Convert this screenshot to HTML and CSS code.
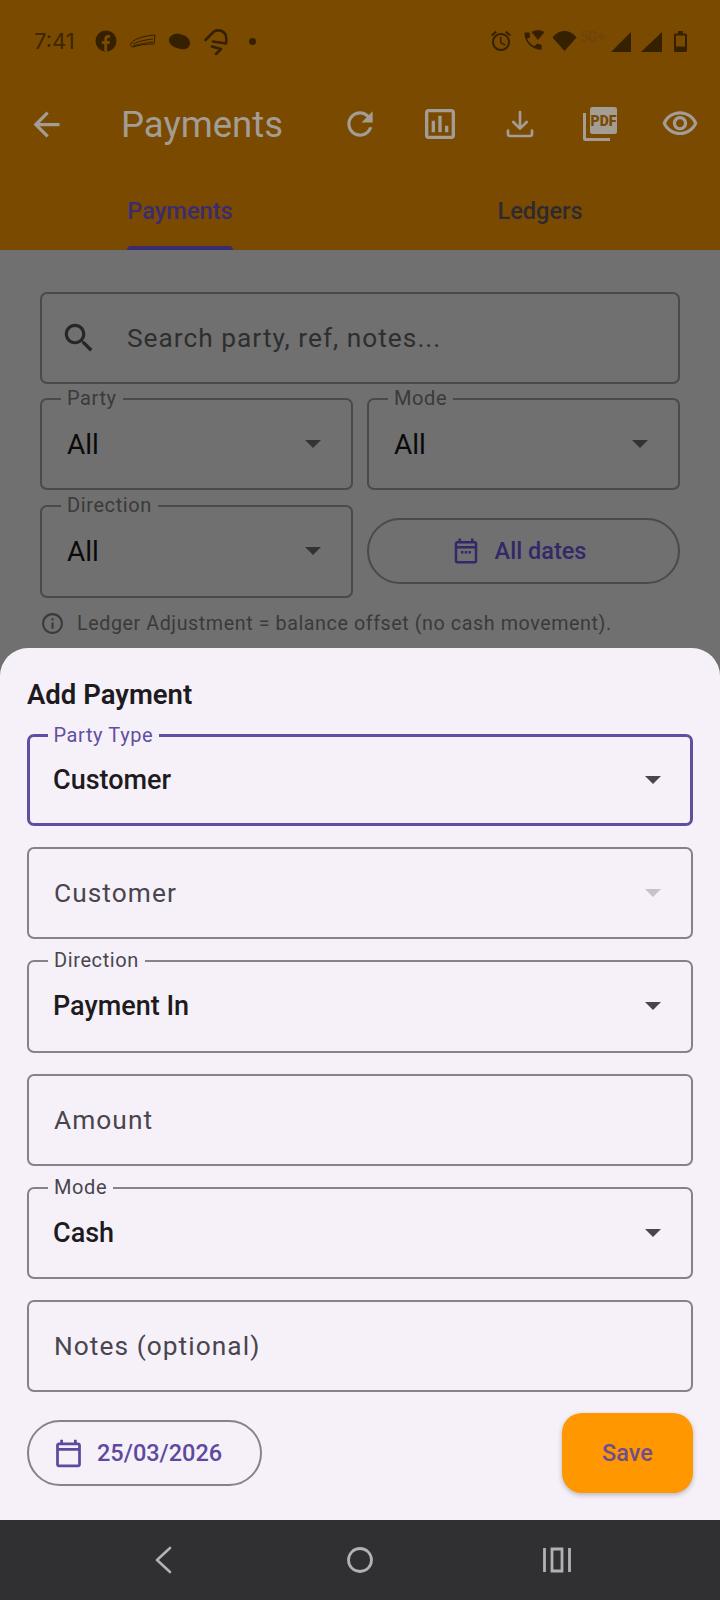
FILE: index.html
```html
<!DOCTYPE html>
<html lang="en">
<head>
    <meta charset="UTF-8">
    <meta name="viewport" content="width=device-width, initial-scale=1.0">
    <title>Payments</title>
    <link rel="stylesheet" href="styles.css">
</head>
<body>
<div class="screen">

    <div class="main">
        <header class="header">
            <!-- Status bar -->
            <div class="status-bar">
                <span class="clock">7:41</span>
                <svg class="st-fb" width="22" height="22" viewBox="0 0 22 22"><circle cx="11" cy="11" r="10.5" fill="currentColor"/><path d="M9.3 21.5v-7.4H6.8V11h2.5V8.9c0-2.6 1.5-4 3.8-4 .8 0 1.6.1 2 .2v2.7h-1.4c-1.3 0-1.6.7-1.6 1.5V11h2.9l-.5 3.1h-2.4v7.4z" fill="#7a4a00"/></svg>
                <svg class="st-pen" width="26" height="14" viewBox="0 0 26 14" fill="none" stroke="currentColor" stroke-width="1"><path d="M1 9C6 4 14 2 25 1l-1 9c-7 0-15 1-21 3-2 0-3-2-2-4zM3 10c6-3 12-4 20-5M3 12c6-2 13-3 20-4"/></svg>
                <svg class="st-blob" width="23" height="17" viewBox="0 0 23 17"><path d="M1 6c1-4 6-6 11-5s10 4 10 9-4 7-9 6C7 15 0 12 1 6z" fill="currentColor"/></svg>
                <svg class="st-hook" width="24" height="26" viewBox="0 0 24 26" fill="none" stroke="currentColor" stroke-width="2.6" stroke-linecap="round" stroke-linejoin="round"><path d="M1.500 11L10 2.500C13 0.500 19 1 21.500 5.500c1 2 1 5 .5 9L9 12.500M8 17.500l9 2.500-5 5"/></svg>
                <span class="st-dot"></span>
                <span class="status-gap"></span>
                <svg class="st-alarm" width="24" height="24" viewBox="0 0 24 24" fill="currentColor"><path d="M22 5.720l-4.600-3.860-1.290 1.530 4.600 3.860L22 5.720zM7.880 3.390L6.600 1.860 2 5.710l1.290 1.530 4.590-3.850zM12.500 8H11v6l4.750 2.850.75-1.230-4-2.370V8zM12 4c-4.970 0-9 4.030-9 9s4.020 9 9 9c4.970 0 9-4.030 9-9s-4.030-9-9-9zm0 16c-3.870 0-7-3.130-7-7s3.130-7 7-7 7 3.130 7 7-3.130 7-7 7z"/></svg>
                <svg class="st-call" width="24" height="24" viewBox="0 0 24 24" fill="currentColor"><path d="M5 9.800c1.400 3 4 5.800 7.300 7.500l2.300-2.300c.3-.3.700-.4 1-.2 1 .4 2 .6 3 .6.600 0 1 .4 1 1v3.300c0 .6-.4 1-1 1C10 20.700 2.500 13 2.500 4.500c0-.6.400-1 1-1h3.200c.6 0 1 .4 1 1 0 1.100.2 2.100.5 3.100.1.300 0 .7-.2 1zM9.500 3c3.500-2.500 9-2.500 13 0l-6.500 8z"/></svg>
                <svg class="st-wifi" width="25" height="20" viewBox="0 0 24 20"><path d="M12 20L0 6.500C3 2.500 7.300 0 12 0s9 2.500 12 6.500z" fill="currentColor"/></svg>
                <span class="net">5G+</span>
                <svg class="st-signal" width="20" height="20" viewBox="0 0 20 20"><path d="M0 20L20 0v20z" fill="currentColor"/></svg>
                <svg class="st-signal two" width="21" height="20" viewBox="0 0 21 20"><path d="M0 20L21 0v20z" fill="currentColor"/></svg>
                <svg class="st-battery" width="13" height="21" viewBox="0 0 13 21" fill="none"><path d="M4 0h5v2.500h2.500c.8 0 1.500.7 1.500 1.500v15.500c0 .8-.7 1.500-1.500 1.500h-10C.7 21 0 20.300 0 19.500V4c0-.8.7-1.500 1.500-1.500H4z" fill="currentColor"/><rect x="2" y="4.500" width="9" height="11" fill="#7a4a00"/></svg>
            </div>

            <!-- App bar -->
            <div class="app-bar">
                <div class="leading">
                    <svg width="39" height="39" viewBox="0 0 24 24" fill="currentColor"><path d="M20 11H7.830l5.590-5.590L12 4l-8 8 8 8 1.410-1.410L7.830 13H20v-2z"/></svg>
                </div>
                <h1 class="title">Payments</h1>
                <div class="action">
                    <svg width="38" height="38" viewBox="0 0 24 24" fill="currentColor"><path d="M17.650 6.350C16.200 4.900 14.210 4 12 4c-4.420 0-7.990 3.580-7.990 8s3.570 8 7.990 8c3.730 0 6.840-2.550 7.730-6h-2.080c-.82 2.330-3.040 4-5.650 4-3.310 0-6-2.690-6-6s2.690-6 6-6c1.660 0 3.140.69 4.220 1.780L13 11h7V4l-2.350 2.350z"/></svg>
                </div>
                <div class="action">
                    <svg width="40" height="40" viewBox="0 0 24 24" fill="currentColor"><path d="M19 3H5c-1.100 0-2 .9-2 2v14c0 1.100.9 2 2 2h14c1.100 0 2-.9 2-2V5c0-1.100-.9-2-2-2zm0 16H5V5h14v14zM7 10h2v7H7zm4-3h2v10h-2zm4 6h2v4h-2z"/></svg>
                </div>
                <div class="action">
                    <svg width="32" height="32" viewBox="0 0 24 24" fill="none" stroke="currentColor" stroke-width="2" stroke-linecap="round" stroke-linejoin="round"><path d="M12 3v12M7 10.500l5 5 5-5M3 17v2.500A1.500 1.500 0 0 0 4.500 21h15a1.500 1.500 0 0 0 1.500-1.500V17"/></svg>
                </div>
                <div class="action">
                    <svg width="36" height="36" viewBox="0 0 36 36"><path d="M1 7h3v25h24v3H3c-1 0-2-1-2-2z" fill="currentColor"/><rect x="8" y="1" width="27" height="27" rx="2.500" fill="currentColor"/><text class="pdf-text" x="21.500" y="19.500">PDF</text></svg>
                </div>
                <div class="action">
                    <svg width="38" height="38" viewBox="0 0 24 24" fill="currentColor"><path d="M12 6c3.790 0 7.170 2.130 8.820 5.500C19.170 14.870 15.790 17 12 17s-7.170-2.130-8.820-5.500C4.830 8.130 8.210 6 12 6m0-2C7 4 2.730 7.110 1 11.500 2.730 15.890 7 19 12 19s9.270-3.110 11-7.500C21.270 7.110 17 4 12 4zm0 5c1.380 0 2.500 1.120 2.500 2.500S13.380 14 12 14s-2.500-1.120-2.500-2.500S10.620 9 12 9m0-2c-2.480 0-4.500 2.020-4.500 4.500S9.520 16 12 16s4.500-2.020 4.500-4.500S14.480 7 12 7z"/></svg>
                </div>
            </div>

            <!-- Tabs -->
            <div class="tabs">
                <div class="tab active"><span class="tab-label">Payments<i class="tab-line"></i></span></div>
                <div class="tab"><span class="tab-label">Ledgers</span></div>
            </div>
        </header>

        <!-- Filters behind the sheet -->
        <section class="filters">
            <div class="field search">
                <svg class="search-icon" width="38" height="38" viewBox="0 0 24 24" fill="currentColor"><path d="M15.500 14h-.79l-.28-.27C15.410 12.590 16 11.110 16 9.500 16 5.910 13.090 3 9.500 3S3 5.910 3 9.500 5.910 16 9.500 16c1.610 0 3.090-.59 4.230-1.570l.27.28v.79l5 4.990L20.490 19l-4.990-5zm-6 0C7.010 14 5 11.990 5 9.500S7.010 5 9.500 5 14 7.010 14 9.500 11.990 14 9.500 14z"/></svg>
                <span class="hint">Search party, ref, notes...</span>
            </div>
            <div class="filter-grid">
                <div class="field">
                    <label class="float-label">Party</label>
                    <span class="value">All</span><i class="arrow"></i>
                </div>
                <div class="field">
                    <label class="float-label">Mode</label>
                    <span class="value">All</span><i class="arrow"></i>
                </div>
                <div class="field">
                    <label class="float-label">Direction</label>
                    <span class="value">All</span><i class="arrow"></i>
                </div>
                <div class="dates-cell">
                    <div class="pill dates-pill">
                        <svg width="30" height="30" viewBox="0 0 24 24" fill="currentColor"><path d="M19 4h-1V2h-2v2H8V2H6v2H5c-1.100 0-2 .9-2 2v14c0 1.100.9 2 2 2h14c1.100 0 2-.9 2-2V6c0-1.100-.9-2-2-2zm0 16H5V10h14v10zm0-12H5V6h14v2zM8 12h2v2H8zm3 0h2v2h-2zm3 0h2v2h-2z"/></svg>
                        <span>All dates</span>
                    </div>
                </div>
            </div>
            <div class="note">
                <svg width="25" height="25" viewBox="0 0 24 24" fill="currentColor"><path d="M11 7h2v2h-2zm0 4h2v6h-2zm1-9C6.480 2 2 6.480 2 12s4.480 10 10 10 10-4.480 10-10S17.520 2 12 2zm0 18c-4.410 0-8-3.590-8-8s3.590-8 8-8 8 3.590 8 8-3.590 8-8 8z"/></svg>
                <span>Ledger Adjustment = balance offset (no cash movement).</span>
            </div>
        </section>

        <!-- Add Payment bottom sheet -->
        <section class="sheet">
            <h2 class="sheet-title">Add Payment</h2>
            <div class="form">
                <div class="field focused">
                    <label class="float-label">Party Type</label>
                    <span class="value">Customer</span><i class="arrow"></i>
                </div>
                <div class="field">
                    <span class="hint">Customer</span><i class="arrow disabled"></i>
                </div>
                <div class="field">
                    <label class="float-label">Direction</label>
                    <span class="value">Payment In</span><i class="arrow"></i>
                </div>
                <div class="field">
                    <span class="hint">Amount</span>
                </div>
                <div class="field">
                    <label class="float-label">Mode</label>
                    <span class="value">Cash</span><i class="arrow"></i>
                </div>
                <div class="field">
                    <span class="hint">Notes (optional)</span>
                </div>
            </div>
            <div class="sheet-footer">
                <div class="pill date-pill">
                    <svg width="33" height="33" viewBox="0 0 24 24" fill="currentColor"><path d="M19 4h-1V2h-2v2H8V2H6v2H5c-1.100 0-2 .9-2 2v14c0 1.100.9 2 2 2h14c1.100 0 2-.9 2-2V6c0-1.100-.9-2-2-2zm0 16H5V10h14v10zm0-12H5V6h14v2z"/></svg>
                    <span>25/03/2026</span>
                </div>
                <button class="save-btn">Save</button>
            </div>
        </section>
    </div>

    <!-- Android navigation bar -->
    <nav class="nav-bar">
        <svg width="30" height="30" viewBox="0 0 30 30" fill="none" stroke="currentColor" stroke-width="2.600" stroke-linecap="round" stroke-linejoin="round"><path d="M22 3L9 15l13 12"/></svg>
        <svg width="30" height="30" viewBox="0 0 30 30" fill="none" stroke="currentColor" stroke-width="2.800"><circle cx="15" cy="15" r="11.500"/></svg>
        <svg width="30" height="30" viewBox="0 0 30 30" fill="none" stroke="currentColor" stroke-width="2.800"><path d="M2.500 3v24M27.500 3v24M10 4h10v22H10z"/></svg>
    </nav>

</div>
</body>
</html>
```

FILE: styles.css
```css
/* Global Styles */
* {
    margin: 0;
    padding: 0;
    box-sizing: border-box;
}

body {
    font-family: 'Roboto', sans-serif;
    background: #707070;
}

.screen {
    width: 720px;
    height: 1600px;
    display: flex;
    flex-direction: column;
    overflow: hidden;
}

.main {
    flex: 1;
    position: relative;
    background: #707070;
}

/* Header (dimmed by the sheet) */
.header {
    height: 250px;
    background: #7a4a00;
    display: flex;
    flex-direction: column;
}

.status-bar {
    height: 82px;
    display: flex;
    align-items: center;
    padding: 0 33px 0 34px;
    color: #352100;
}

.clock {
    width: 61px;
    font-family: 'Inter', sans-serif;
    font-size: 22px;
    color: #3d2600;
}

.st-fb { margin-right: 13px; }
.st-pen { margin-right: 12px; }
.st-blob { margin-right: 13px; }
.st-hook { margin-right: 21px; margin-top: 1px; }

.st-dot {
    width: 7px;
    height: 7px;
    border-radius: 50%;
    background: currentColor;
}

.status-gap { flex: 1; }

.st-alarm { margin-right: 9px; }
.st-call { margin-right: 6px; }
.st-wifi { margin-right: 3px; }
.st-signal { margin-top: 2px; margin-right: 10px; }
.st-signal.two { margin-right: 12px; }
.st-battery { margin-top: 1px; }

.net {
    width: 31px;
    align-self: flex-start;
    margin-top: 29px;
    font-size: 14px;
    color: #6a4310;
}

.app-bar {
    height: 84px;
    display: flex;
    align-items: center;
    color: #a39d95;
}

.leading {
    width: 121px;
    padding-left: 27px;
    display: flex;
}

.title {
    flex: 1;
    font-size: 36.5px;
    font-weight: 400;
}

.action {
    width: 80px;
    display: flex;
    justify-content: center;
}

.pdf-text {
    font-family: 'Roboto', sans-serif;
    font-size: 14px;
    font-weight: 900;
    fill: #7a4a00;
    text-anchor: middle;
}

.tabs {
    flex: 1;
    display: flex;
}

.tab {
    flex: 1;
    display: flex;
    justify-content: center;
    align-items: flex-end;
    font-size: 23.6px;
    font-weight: 500;
    color: #2d2b30;
}

.tab.active { color: #3b2c70; }

.tab-label {
    display: flex;
    flex-direction: column;
    height: 53px;
    justify-content: space-between;
}

.tab-line {
    height: 4px;
    background: #3b2c70;
    border-radius: 4px 4px 0 0;
}

/* Outlined fields */
.field {
    position: relative;
    height: 92.2px;
    display: flex;
    align-items: center;
    justify-content: space-between;
    padding: 0 30px 0 25px;
    border: 2px solid #86818b;
    border-radius: 7px;
}

.float-label {
    position: absolute;
    top: -14px;
    left: 19px;
    padding: 0 6px;
    font-size: 20px;
    line-height: 24px;
    letter-spacing: 0.6px;
    color: #49454f;
    background: #f6f1f9;
}

.value {
    margin-left: -1px;
    font-size: 27px;
    font-weight: 500;
    color: #1d1b20;
}

.hint {
    font-size: 26.3px;
    letter-spacing: 1.05px;
    color: #49454f;
}

.arrow {
    width: 0;
    height: 0;
    border-left: 8.5px solid transparent;
    border-right: 8.5px solid transparent;
    border-top: 8.5px solid #49454f;
}

.arrow.disabled { border-top-color: #c6c2ca; }

.pill {
    display: flex;
    align-items: center;
    height: 66px;
    border: 2px solid #86818b;
    border-radius: 33px;
    font-size: 23.5px;
    font-weight: 500;
    color: #5d4a9f;
}

/* Filters */
.filters {
    padding: 42px 40px 0;
}

.filters .field {
    border-color: #4a4a4a;
}

.filters .float-label {
    background: #707070;
    color: #3a3a3a;
}

.filters .value {
    margin-left: 0;
    font-weight: 400;
    font-size: 28px;
    color: #0a0a0a;
}

.filters .hint {
    flex: 1;
    letter-spacing: 1px;
    color: #2e2e2e;
}

.filters .arrow {
    border-top-color: #333333;
}

.field.search {
    justify-content: flex-start;
    padding-left: 18px;
}

.search-icon {
    margin-right: 29px;
    color: #262626;
}

.filter-grid {
    display: grid;
    grid-template-columns: 313px 313px;
    column-gap: 14px;
    row-gap: 15px;
    margin-top: 14px;
}

.dates-cell {
    display: flex;
    align-items: center;
}

.dates-pill {
    width: 100%;
    justify-content: center;
    gap: 14px;
    padding-right: 10px;
    border-color: #4a4a4a;
    color: #332868;
}

.note {
    display: flex;
    align-items: center;
    gap: 12px;
    margin-top: 13px;
    font-size: 19.7px;
    letter-spacing: 0.58px;
    color: #3a3a3a;
}

/* Add Payment sheet */
.sheet {
    position: absolute;
    left: 0;
    right: 0;
    bottom: 0;
    height: 872px;
    padding: 32px 27px 0;
    background: #f6f1f9;
    border-radius: 28px 28px 0 0;
}

.sheet-title {
    font-size: 27.5px;
    font-weight: 600;
    line-height: 30px;
    color: #1d1b20;
}

.form {
    display: flex;
    flex-direction: column;
    gap: 21px;
    margin-top: 24px;
}

.field.focused {
    border: 3px solid #5f4fa0;
    padding-left: 24px;
    padding-right: 29px;
}

.focused .float-label {
    top: -14px;
    left: 17.5px;
    color: #5f4fa0;
}

.sheet-footer {
    display: flex;
    align-items: center;
    justify-content: space-between;
    margin-top: 21px;
}

.date-pill {
    width: 235px;
    gap: 12px;
    padding-left: 23px;
}

.save-btn {
    width: 131px;
    height: 80px;
    border: none;
    border-radius: 20px;
    background: #ff9800;
    color: #6f4e8e;
    font-family: 'Roboto', sans-serif;
    font-size: 23.5px;
    font-weight: 500;
    box-shadow: 0 2px 5px rgba(0, 0, 0, 0.25);
}

/* Android navigation bar */
.nav-bar {
    height: 80px;
    flex-shrink: 0;
    display: flex;
    align-items: center;
    justify-content: center;
    gap: 167px;
    background: #303032;
    color: #b2b2b2;
}
```
